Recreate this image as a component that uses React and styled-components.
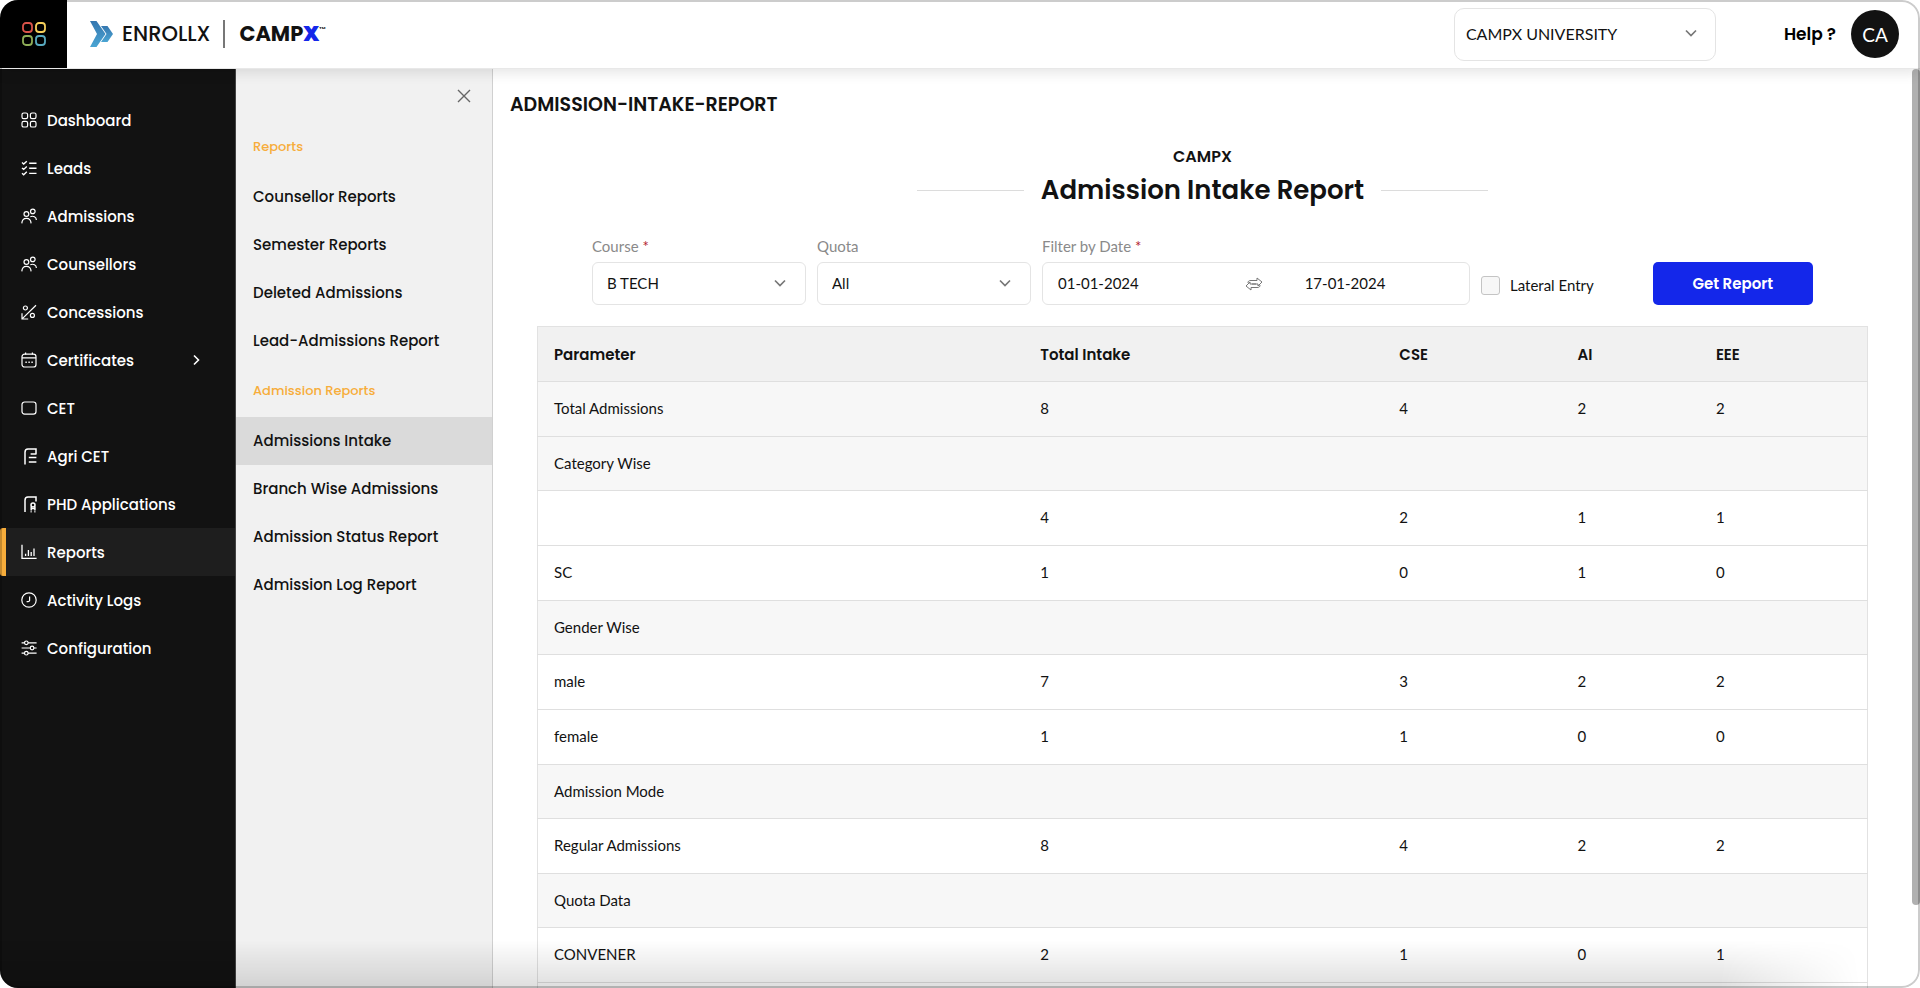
import React, { useState } from 'react';
import styled, { createGlobalStyle } from 'styled-components';

const HEAD_FONT = `Poppins, Inter, 'Open Sans', sans-serif`;
const BODY_FONT = `Avenir, Lato, 'Open Sans', sans-serif`;

const GlobalStyle = createGlobalStyle`
  * {
    box-sizing: border-box;
  }
  body {
    margin: 0;
    background: #fff;
    color: #121212;
    font-family: ${BODY_FONT};
    font-size: 15px;
  }
  button, input, select {
    font: inherit;
    color: inherit;
  }
  a {
    color: inherit;
    text-decoration: none;
  }
`;

const Shell = styled.div`
  position: relative;
  display: flex;
  flex-direction: column;
  height: 100vh;
  border-radius: 18px;
  overflow: hidden;
  &:before {
    content: '';
    position: absolute;
    left: 0;
    right: 60px;
    bottom: 0;
    z-index: 4;
    height: 48px;
    background: linear-gradient(rgba(0, 0, 0, 0), rgba(0, 0, 0, 0.13));
    mask-image: linear-gradient(to left, transparent, #000 140px);
    pointer-events: none;
  }
  &:after {
    content: '';
    position: absolute;
    inset: 0;
    z-index: 5;
    border: 2px solid rgba(0, 0, 0, 0.2);
    border-radius: 18px;
    pointer-events: none;
  }
`;

const Header = styled.header`
  position: relative;
  z-index: 2;
  display: flex;
  align-items: center;
  height: 69px;
  padding-right: 21px;
  border-bottom: 1px solid #e8e8e8;
  background: #fff;
  box-shadow: 0 4px 12px rgba(0, 0, 0, 0.1);
`;

const AppsButton = styled.button`
  display: flex;
  align-items: center;
  justify-content: center;
  align-self: stretch;
  width: 67px;
  border: 0;
  padding: 0;
  background: #000;
  cursor: pointer;
`;

const Brand = styled.a`
  display: flex;
  align-items: center;
  margin-left: 23px;
  font-family: ${HEAD_FONT};
  svg {
    margin-right: 8px;
  }
`;

const BrandName = styled.span`
  font-size: 21px;
  font-weight: 500;
  padding-right: 13px;
  border-right: 2px solid #777;
  line-height: 28px;
`;

const BrandOwner = styled.span`
  padding-left: 14px;
  font-size: 21px;
  font-weight: 700;
  line-height: 28px;
  b {
    color: #1427ea;
  }
  sup {
    font-size: 4px;
    vertical-align: 12px;
    line-height: 0;
  }
`;

const HeaderRight = styled.div`
  display: flex;
  align-items: center;
  margin-left: auto;
`;

const HelpLink = styled.a`
  margin: 0 15px 0 68px;
  color: #000;
  font-family: ${HEAD_FONT};
  font-size: 17px;
  font-weight: 600;
`;

const Avatar = styled.button`
  width: 48px;
  height: 48px;
  border: 0;
  border-radius: 50%;
  padding: 0;
  background: #121212;
  color: #fff;
  font-size: 19px;
`;

const SelectBox = styled.div`
  position: relative;
  width: ${p => (p.$large ? '262px' : 'auto')};
  select {
    width: 100%;
    height: ${p => (p.$large ? '53px' : '43px')};
    padding: 0 40px 2px ${p => (p.$large ? '11px' : '14px')};
    border: 1px solid #e4e4e4;
    border-radius: ${p => (p.$large ? '10px' : '6px')};
    background: #fff;
    font-size: ${p => (p.$large ? '16px' : '15px')};
    appearance: none;
  }
  svg {
    position: absolute;
    top: 50%;
    right: ${p => (p.$large ? '19px' : '20px')};
    margin-top: -7px;
    pointer-events: none;
  }
`;

const Body = styled.div`
  display: flex;
  flex: 1;
  min-height: 0;
`;

const Sidebar = styled.nav`
  flex: none;
  width: 236px;
  padding-top: 27px;
  border-right: 1px solid #444;
  background: #121212;
`;

const NavItem = styled.a`
  display: flex;
  align-items: center;
  height: 48px;
  padding: 0 35px 0 ${p => (p.$active ? '15px' : '21px')};
  border-left: ${p => (p.$active ? '6px solid #f7ad3b' : '0')};
  border-radius: 3px 0 0 3px;
  background: ${p => (p.$active ? '#1e1e1e' : 'transparent')};
  color: #fff;
  font-family: ${HEAD_FONT};
  font-size: 15px;
  font-weight: 500;
  svg {
    flex: none;
  }
  span {
    flex: 1;
    margin-left: 10px;
  }
`;

const SubMenu = styled.nav`
  flex: none;
  width: 257px;
  border-right: 1px solid #d0d0d0;
  background: #f1f1f1;
  font-family: ${HEAD_FONT};
`;

const CloseRow = styled.div`
  display: flex;
  align-items: center;
  justify-content: flex-end;
  height: 52px;
  padding: 2px 18px 0 0;
  button {
    display: flex;
    border: 0;
    padding: 3px;
    background: none;
    cursor: pointer;
  }
`;

const SubTitle = styled.h2`
  margin: 0;
  padding-left: 17px;
  color: #f7ad3b;
  font-size: 13px;
  font-weight: 500;
  line-height: 52px;
`;

const SubItem = styled.a`
  display: block;
  padding-left: 17px;
  background: ${p => (p.$active ? '#dadada' : 'transparent')};
  font-size: 15px;
  font-weight: 500;
  line-height: 48px;
`;

const Main = styled.main`
  flex: 1;
  min-width: 0;
  padding: 24px 44px 0;
  overflow: auto;
  scrollbar-width: none;
`;

const PageTitle = styled.h1`
  margin: 0 0 28px -27px;
  font-family: ${HEAD_FONT};
  font-size: 19px;
  font-weight: 600;
  line-height: 24px;
`;

const OrgName = styled.p`
  margin: 0;
  font-family: ${HEAD_FONT};
  font-size: 16px;
  font-weight: 600;
  line-height: 24px;
  text-align: center;
`;

const ReportTitle = styled.h2`
  display: flex;
  align-items: center;
  justify-content: center;
  gap: 17px;
  margin: 3px 0 28px;
  font-family: ${HEAD_FONT};
  font-size: 26px;
  font-weight: 600;
  line-height: 36px;
  &:before,
  &:after {
    content: '';
    width: 107px;
    height: 1px;
    background: #dcdcdc;
  }
`;

const Filters = styled.form`
  display: grid;
  grid-template-columns: 4fr 4fr 8fr 3fr 3fr;
  align-items: end;
  gap: 11px;
  margin: 0 55px 21px;
`;

const Field = styled.div`
  min-width: 0;
  & > label {
    display: block;
    margin-bottom: 6px;
    color: #8a8a8a;
    line-height: 20px;
  }
  & > label b {
    color: #b3202c;
    font-weight: 400;
  }
`;

const DateRange = styled.div`
  display: grid;
  grid-template-columns: 5fr auto 4fr;
  align-items: center;
  height: 43px;
  padding: 0 15px;
  border: 1px solid #e4e4e4;
  border-radius: 6px;
  input {
    width: 100%;
    min-width: 0;
    border: 0;
    padding: 0 0 2px;
    background: none;
    outline: 0;
  }
  svg {
    margin-right: 42px;
  }
`;

const CheckLabel = styled.label`
  display: flex;
  align-items: center;
  gap: 10px;
  height: 40px;
  white-space: nowrap;
  input {
    width: 19px;
    height: 19px;
    margin: 0;
    border: 1px solid #c4c4c4;
    border-radius: 3px;
    background: #f7f7f7;
    appearance: none;
  }
  input:checked {
    background: #1427ea;
  }
`;

const SubmitButton = styled.button`
  height: 43px;
  border: 0;
  border-radius: 5px;
  background: #1427ea;
  color: #fff;
  font-family: ${HEAD_FONT};
  font-size: 15px;
  font-weight: 600;
  cursor: pointer;
`;

const Table = styled.table`
  width: 100%;
  border: 1px solid #e2e2e2;
  border-collapse: collapse;
  table-layout: fixed;
  th,
  td {
    padding: 0 16px 2px;
    border-bottom: 1px solid #dfdfdf;
    text-align: left;
  }
  th {
    height: 55px;
    padding-bottom: 0;
    background: #f1f1f1;
    font-family: ${HEAD_FONT};
    font-size: 15px;
    font-weight: 600;
  }
`;

const Row = styled.tr`
  height: ${p => (p.$section ? '54px' : '55px')};
  background: ${p => (p.$shaded ? '#f7f7f7' : '#fff')};
`;

const ScrollTrack = styled.div`
  flex: none;
  width: 8px;
`;

const ScrollThumb = styled.div`
  height: 91%;
  border-radius: 4px;
  background: #b0b0b0;
`;

const ICONS = {
  grid: (
    <>
      <rect x="1" y="1" width="5.6" height="5.6" rx="1.6" />
      <rect x="9.4" y="1" width="5.6" height="5.6" rx="1.6" />
      <rect x="1" y="9.4" width="5.6" height="5.6" rx="1.6" />
      <rect x="9.4" y="9.4" width="5.6" height="5.6" rx="1.6" />
    </>
  ),
  checks: (
    <path
      d="M1 2.6l1.7 1.5L5.8 1.2M1 7.9l1.7 1.5 3.1-2.9M1 13.2l1.7 1.5 3.1-2.9M8.2 3.2h7.3M8.2 8.3h7.3M8.2 13.4h7.3"
      strokeWidth="1.4"
    />
  ),
  people: (
    <>
      <circle cx="5.4" cy="6" r="2.4" />
      <circle cx="11.8" cy="3.4" r="2.3" />
      <path d="M.8 15.4c.2-3.2 2-5 4.6-5s4.5 1.8 4.7 5M9.3 8.7c3-1.3 6 .4 6.1 3.2" />
    </>
  ),
  percent: (
    <>
      <circle cx="4.4" cy="4" r="2" />
      <circle cx="11.4" cy="11.4" r="2" />
      <path d="M15 1.2L1.6 14.4M1 9.2V15h6.2" />
    </>
  ),
  calendar: (
    <>
      <rect x="1" y="2.2" width="14" height="12.8" rx="2.6" />
      <path d="M1 5.8h14M4.6.6v2M11.4.6v2" />
      <path d="M4.4 10.2h1.4M7.4 10.2h1.4M10.4 10.2h1.4" strokeWidth="1.6" />
    </>
  ),
  box: <rect x="1" y="2" width="14" height="12.2" rx="2.6" />,
  sheet: (
    <path d="M4 16.6V4.2C4 2 5 1 7 1h8v5.2M7.8 9.4h7.6M7.8 14h7.6M9.6 6h5.8" strokeWidth="1.5" />
  ),
  badge: (
    <>
      <path d="M4 16V4.2C4 2 5 1 7 1h8v4.6" strokeWidth="1.5" />
      <circle cx="12" cy="9" r="2" strokeWidth="1.5" />
      <path d="M10.2 10.6v3.8M13.9 10.6v3.8M10.2 12.4h3.7M9.6 15.8h1M13.4 15.8h1" strokeWidth="1.5" />
    </>
  ),
  chart: <path d="M1 .8v13.600h14.600M4.600 12V9.800M7.400 12V6M10.200 12V8M13 12V4.600" strokeWidth="1.300" />,
  clock: (
    <>
      <circle cx="8" cy="8" r="7.2" />
      <path d="M8.600 4.600v3.800c0 .6-1 1.200-3 1.300" />
    </>
  ),
  sliders: (
    <>
      <path d="M.6 2.800h3M7 2.800h8.600M.6 8h8.600M13 8h2.600M.6 13.200h3M7 13.200h8.600" />
      <circle cx="5.3" cy="2.8" r="1.8" />
      <circle cx="11.1" cy="8" r="1.8" />
      <circle cx="5.3" cy="13.2" r="1.8" />
    </>
  ),
};

const Icon = ({ name }) => (
  <svg width="16" height="16" viewBox="0 0 16 16" fill="none" stroke="#fff" strokeWidth="1.2" overflow="visible">
    {ICONS[name]}
  </svg>
);

const Chevron = () => (
  <svg width="12" height="12" viewBox="0 0 12 12" fill="none" stroke="#777" strokeWidth="1.7">
    <path d="M1 3.5l5 5 5-5" />
  </svg>
);

const navItems = [
  { label: 'Dashboard', icon: 'grid' },
  { label: 'Leads', icon: 'checks' },
  { label: 'Admissions', icon: 'people' },
  { label: 'Counsellors', icon: 'people' },
  { label: 'Concessions', icon: 'percent' },
  { label: 'Certificates', icon: 'calendar', more: true },
  { label: 'CET', icon: 'box' },
  { label: 'Agri CET', icon: 'sheet' },
  { label: 'PHD Applications', icon: 'badge' },
  { label: 'Reports', icon: 'chart', active: true },
  { label: 'Activity Logs', icon: 'clock' },
  { label: 'Configuration', icon: 'sliders' },
];

const subMenu = [
  {
    title: 'Reports',
    items: ['Counsellor Reports', 'Semester Reports', 'Deleted Admissions', 'Lead-Admissions Report'],
  },
  {
    title: 'Admission Reports',
    items: ['Admissions Intake', 'Branch Wise Admissions', 'Admission Status Report', 'Admission Log Report'],
  },
];

const columns = [
  { label: 'Parameter', width: '36.6%' },
  { label: 'Total Intake', width: '27%' },
  { label: 'CSE', width: '13.4%' },
  { label: 'AI', width: '10.4%' },
  { label: 'EEE', width: '12.6%' },
];

const rows = [
  { cells: ['Total Admissions', 8, 4, 2, 2], shaded: true },
  { cells: ['Category Wise', '', '', '', ''], section: true },
  { cells: ['', 4, 2, 1, 1] },
  { cells: ['SC', 1, 0, 1, 0] },
  { cells: ['Gender Wise', '', '', '', ''], section: true },
  { cells: ['male', 7, 3, 2, 2] },
  { cells: ['female', 1, 1, 0, 0] },
  { cells: ['Admission Mode', '', '', '', ''], section: true },
  { cells: ['Regular Admissions', 8, 4, 2, 2] },
  { cells: ['Quota Data', '', '', '', ''], section: true },
  { cells: ['CONVENER', 2, 1, 0, 1] },
  { cells: ['', '', '', '', ''] },
];

function TopBar() {
  return (
    <Header>
      <AppsButton type="button" aria-label="Apps">
        <svg width="24" height="24" viewBox="0 0 24 24" fill="none" strokeWidth="1.8">
          <rect x="1" y="1" width="9" height="9" rx="3" stroke="#d9534a" />
          <rect x="14" y="1" width="9" height="9" rx="3" stroke="#f5cf5b" />
          <rect x="1" y="14" width="9" height="9" rx="3" stroke="#8fae57" />
          <rect x="14" y="14" width="9" height="9" rx="3" stroke="#58a9bf" />
        </svg>
      </AppsButton>
      <Brand href="#">
        <svg width="24" height="26" viewBox="0 0 24 26">
          <defs>
            <linearGradient id="brand" x1="0" y1="0" x2="0" y2="1">
              <stop offset="0" stopColor="#3577b0" />
              <stop offset="1" stopColor="#4aa5d3" />
            </linearGradient>
          </defs>
          <path d="M0 0h6.5l9 13-9 13H0l7-13z" fill="url(#brand)" />
          <path d="M11 5h6.5l5.5 8-5.5 8H11l5.5-8z" fill="url(#brand)" />
        </svg>
        <BrandName>ENROLLX</BrandName>
        <BrandOwner>
          CAMP<b>X</b>
          <sup>TM</sup>
        </BrandOwner>
      </Brand>
      <HeaderRight>
        <SelectBox $large>
          <select aria-label="University">
            <option>CAMPX UNIVERSITY</option>
          </select>
          <Chevron />
        </SelectBox>
        <HelpLink href="#">Help ?</HelpLink>
        <Avatar type="button">CA</Avatar>
      </HeaderRight>
    </Header>
  );
}

function ReportFilters() {
  const [from, setFrom] = useState('01-01-2024');
  const [to, setTo] = useState('17-01-2024');
  const [lateral, setLateral] = useState(false);

  return (
    <Filters onSubmit={e => e.preventDefault()}>
      <Field>
        <label htmlFor="course">
          Course <b>*</b>
        </label>
        <SelectBox>
          <select id="course">
            <option>B TECH</option>
          </select>
          <Chevron />
        </SelectBox>
      </Field>
      <Field>
        <label htmlFor="quota">Quota</label>
        <SelectBox>
          <select id="quota">
            <option>All</option>
          </select>
          <Chevron />
        </SelectBox>
      </Field>
      <Field>
        <label htmlFor="from">
          Filter by Date <b>*</b>
        </label>
        <DateRange>
          <input id="from" value={from} onChange={e => setFrom(e.target.value)} />
          <svg width="18" height="14" viewBox="0 0 18 14" fill="none" stroke="#777" strokeLinejoin="round">
            <path d="M3 6c0-2 1-2.500 3-2.500h6V1l5 4-4 4V7H7" />
            <path d="M15 8c0 2-1 2.500-3 2.500H6V13L1 9l4-4v2h6" />
          </svg>
          <input aria-label="To date" value={to} onChange={e => setTo(e.target.value)} />
        </DateRange>
      </Field>
      <CheckLabel>
        <input type="checkbox" checked={lateral} onChange={e => setLateral(e.target.checked)} />
        Lateral Entry
      </CheckLabel>
      <SubmitButton type="submit">Get Report</SubmitButton>
    </Filters>
  );
}

function App() {
  return (
    <Shell>
      <GlobalStyle />
      <TopBar />
      <Body>
        <Sidebar>
          {navItems.map(item => (
            <NavItem key={item.label} href="#" $active={item.active}>
              <Icon name={item.icon} />
              <span>{item.label}</span>
              {item.more && (
                <svg width="8" height="12" viewBox="0 0 8 12" fill="none" stroke="#fff" strokeWidth="1.6">
                  <path d="M2 1.5L6.5 6 2 10.500" />
                </svg>
              )}
            </NavItem>
          ))}
        </Sidebar>
        <SubMenu>
          <CloseRow>
            <button type="button" aria-label="Close">
              <svg width="14" height="14" viewBox="0 0 14 14" stroke="#666" strokeWidth="1.4">
                <path d="M1 1l12 12M13 1L1 13" />
              </svg>
            </button>
          </CloseRow>
          {subMenu.map(group => (
            <React.Fragment key={group.title}>
              <SubTitle>{group.title}</SubTitle>
              {group.items.map(item => (
                <SubItem key={item} href="#" $active={item === 'Admissions Intake'}>
                  {item}
                </SubItem>
              ))}
            </React.Fragment>
          ))}
        </SubMenu>
        <Main>
          <PageTitle>ADMISSION-INTAKE-REPORT</PageTitle>
          <OrgName>CAMPX</OrgName>
          <ReportTitle>Admission Intake Report</ReportTitle>
          <ReportFilters />
          <Table>
            <colgroup>
              {columns.map(col => (
                <col key={col.label} width={col.width} />
              ))}
            </colgroup>
            <thead>
              <tr>
                {columns.map(col => (
                  <th key={col.label}>{col.label}</th>
                ))}
              </tr>
            </thead>
            <tbody>
              {rows.map((row, i) => (
                <Row key={i} $section={row.section} $shaded={row.section || row.shaded}>
                  {row.cells.map((cell, j) => (
                    <td key={j}>{cell}</td>
                  ))}
                </Row>
              ))}
            </tbody>
          </Table>
        </Main>
        <ScrollTrack>
          <ScrollThumb />
        </ScrollTrack>
      </Body>
    </Shell>
  );
}

export default App;
